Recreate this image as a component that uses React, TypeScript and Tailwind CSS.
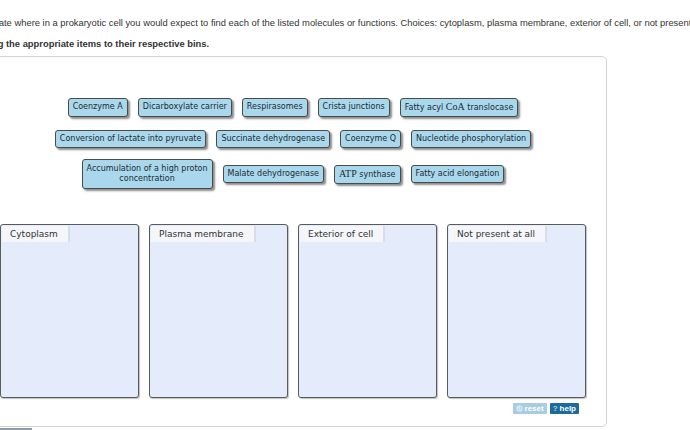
import React from "react";

const chipFont = { fontFamily: '"DejaVu Sans", Verdana, sans-serif' };

const Chip = ({ children, wide }: { children: React.ReactNode; wide?: boolean }) => (
    <div
        className={`rounded-[3px] border border-[#4a4a4a] bg-[#a9d8ec] px-[4px] text-center text-[8px] leading-[10px] text-[#1d2a33] shadow-[2px_2px_2px_rgba(0,0,0,0.45)] ${
            wide ? "py-[4px]" : "py-[3px]"
        }`}
        style={chipFont}
    >
        {children}
    </div>
);

const Serif = ({ children }: { children: React.ReactNode }) => (
    <span className="font-['Liberation_Serif',serif] text-[10px]">{children}</span>
);

const Bin = ({ label }: { label: string }) => (
    <div className="h-[174px] w-[139px] rounded-[3px] border border-[#5a5a5a] bg-[#e4ecfb] p-px shadow-[1px_1px_1px_rgba(0,0,0,0.25)]">
        <div
            className="w-fit border-r-2 border-[#d8dde8] bg-[#f4f6fa] py-[2px] pl-[8px] pr-[10px] text-[9px] leading-[12px] text-[#333]"
            style={chipFont}
        >
            {label}
        </div>
    </div>
);

export default function App() {
    return (
        <div className="relative h-[430px] w-[690px] overflow-hidden bg-white font-['Liberation_Sans',Arial,sans-serif]">
            <div className="ml-[-21px] pt-[17px]">
                <p className="whitespace-nowrap text-[9.4px] leading-[12px] text-[#333]">
                    Indicate where in a prokaryotic cell you would expect to find each of the listed molecules or functions. Choices: cytoplasm, plasma membrane, exterior of cell, or not present at all.
                </p>
                <p className="mt-[9px] whitespace-nowrap pl-[3px] text-[9.4px] font-bold leading-[12px] text-[#333]">
                    Drag the appropriate items to their respective bins.
                </p>

                <div className="mt-[6px] h-[371px] w-[628px] rounded-[5px] border border-[#d2d2d2] bg-white">
                    <div className="pt-[41px]">
                        <div className="flex justify-center gap-[10px]">
                            <Chip>Coenzyme A</Chip>
                            <Chip>Dicarboxylate carrier</Chip>
                            <Chip>Respirasomes</Chip>
                            <Chip>Crista junctions</Chip>
                            <Chip>
                                Fatty acyl <Serif>CoA</Serif> translocase
                            </Chip>
                        </div>
                        <div className="mt-[13px] flex justify-center gap-[10px]">
                            <Chip>Conversion of lactate into pyruvate</Chip>
                            <Chip>Succinate dehydrogenase</Chip>
                            <Chip>Coenzyme Q</Chip>
                            <Chip>Nucleotide phosphorylation</Chip>
                        </div>
                        <div className="mt-[11px] flex items-center justify-center gap-[10px]">
                            <Chip wide>
                                Accumulation of a high proton
                                <br />
                                concentration
                            </Chip>
                            <Chip>Malate dehydrogenase</Chip>
                            <Chip>
                                <Serif>ATP</Serif> synthase
                            </Chip>
                            <Chip>Fatty acid elongation</Chip>
                        </div>
                    </div>

                    <div className="mt-[35px] flex gap-[10px] px-[20px]">
                        <Bin label="Cytoplasm" />
                        <Bin label="Plasma membrane" />
                        <Bin label="Exterior of cell" />
                        <Bin label="Not present at all" />
                    </div>

                    <div className="mt-[5px] flex justify-end gap-[3px] pr-[27px]">
                        <div className="flex h-[11px] items-center gap-[2px] rounded-[1px] bg-[#a8cde2] px-[3px] text-[8px] font-bold leading-none text-white">
                            <svg width="7" height="7" viewBox="0 0 10 10">
                                <circle cx="5" cy="5" r="4.5" fill="#d6e8f2" />
                                <path d="M3 5a2 2 0 1 0 2-2" stroke="#a8cde2" strokeWidth="1.2" fill="none" />
                            </svg>
                            reset
                        </div>
                        <div className="flex h-[11px] items-center gap-[2px] rounded-[1px] bg-[#1d6a9c] px-[3px] text-[8px] font-bold leading-none text-white">
                            <span className="text-[#9fe0d8]">?</span>
                            help
                        </div>
                    </div>
                </div>
            </div>
            <div className="absolute bottom-0 left-0 h-[2px] w-[32px] bg-[#8a9aa8]" />
        </div>
    );
}
